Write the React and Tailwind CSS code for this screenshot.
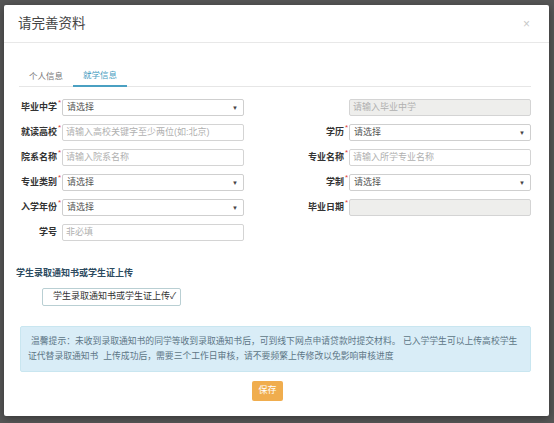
import React from "react";

const font = { fontFamily: '"Liberation Sans", "Noto Sans CJK SC", sans-serif' };

const Field = ({ label, star = true, kind = "input", placeholder = "", disabled = false }) => (
    <div className="flex items-center w-[225px] h-[17px]">
        <div className="w-[38px] text-right text-[9px] font-bold text-[#333] whitespace-nowrap leading-none">
            {label}
        </div>
        <div className="w-[5px] h-full text-[8px] leading-none text-[#e04040] pl-[1px]">
            {star && label ? "*" : ""}
        </div>
        {kind === "select" ? (
            <div className="flex-1 h-full flex items-center justify-between border border-[#cfcfcf] rounded-[2px] bg-white pl-[4px] pr-[5px]">
                <span className="text-[9px] text-[#555] leading-none">请选择</span>
                <span className="text-[6px] text-[#444] leading-none">▼</span>
            </div>
        ) : (
            <div
                className={`flex-1 h-full flex items-center border border-[#d4d4d4] rounded-[2px] pl-[3px] ${disabled ? "bg-[#eeeeec]" : "bg-white"}`}
            >
                <span className="text-[9px] text-[#b0b0b0] leading-none whitespace-nowrap">{placeholder}</span>
            </div>
        )}
    </div>
);

export default function App() {
    const rows = [
        [
            { label: "毕业中学", kind: "select" },
            { label: "", placeholder: "请输入毕业中学", disabled: true },
        ],
        [
            { label: "就读高校", placeholder: "请输入高校关键字至少两位(如:北京)" },
            { label: "学历", kind: "select" },
        ],
        [
            { label: "院系名称", placeholder: "请输入院系名称" },
            { label: "专业名称", placeholder: "请输入所学专业名称" },
        ],
        [
            { label: "专业类别", kind: "select" },
            { label: "学制", kind: "select" },
        ],
        [
            { label: "入学年份", kind: "select" },
            { label: "毕业日期", disabled: true },
        ],
        [{ label: "学号", star: false, placeholder: "非必填" }, null],
    ];

    return (
        <div className="w-[554px] h-[423px] bg-[#575757] pt-[5px] pl-[4px] overflow-hidden" style={font}>
            <div className="w-[545px] h-[411px] bg-white rounded-[2px] shadow-[0_2px_8px_rgba(0,0,0,0.4)] flex flex-col overflow-hidden">
                {/* header */}
                <div className="h-[38px] shrink-0 flex items-center justify-between border-b border-[#e8e8e8] pl-[14px] pr-[19px]">
                    <span className="text-[13.5px] text-[#444] leading-none">请完善资料</span>
                    <span className="text-[12px] text-[#c8c8c8] leading-none">×</span>
                </div>

                {/* body */}
                <div className="pl-[15px] pr-[18px] pt-[23px]">
                    <div className="flex border-b border-[#e6e6e6] h-[21px]">
                        <div className="px-[10px] h-[20px] flex items-center text-[8.5px] text-[#777]">个人信息</div>
                        <div className="px-[10px] h-[21px] flex items-center text-[8.5px] text-[#4aa0c2] border-b-2 border-[#4aa0c2]">
                            就学信息
                        </div>
                    </div>

                    <div className="flex flex-col gap-[8px] pt-[12px]">
                        {rows.map((r, i) => (
                            <div key={i} className="flex justify-between">
                                <Field {...r[0]} />
                                {r[1] ? <Field {...r[1]} /> : <div className="w-[225px]" />}
                            </div>
                        ))}
                    </div>

                    <div className="pt-[28px] -ml-[3px] text-[9px] font-bold text-[#2d4b5f] leading-none">
                        学生录取通知书或学生证上传
                    </div>
                    <div className="pt-[10px] pl-[23px]">
                        <div className="w-[139px] h-[18px] flex items-center border border-[#b9cfd3] rounded-[2px] pl-[10px] text-[9px] text-[#333] whitespace-nowrap overflow-hidden">
                            学生录取通知书或学生证上传✓
                        </div>
                    </div>

                    <div className="mt-[20px] ml-[1px] bg-[#d9edf7] border border-[#c9e6f0] rounded-[2px] py-[7px] pl-[7px] pr-[4px] text-[8.8px] leading-[15px] text-[#5d7686] whitespace-nowrap overflow-hidden">
                        <div className="pl-[3px]">
                            温馨提示：未收到录取通知书的同学等收到录取通知书后，可到线下网点申请贷款时提交材料。 已入学学生可以上传高校学生
                        </div>
                        <div>证代替录取通知书 &nbsp;上传成功后，需要三个工作日审核，请不要频繁上传修改以免影响审核进度</div>
                    </div>
                </div>

                <div className="pt-[9px] pl-[248px]">
                    <div className="w-[31px] h-[20px] flex items-center justify-center bg-[#f0ad4e] rounded-[2px] text-[9px] text-white">
                        保存
                    </div>
                </div>
            </div>
        </div>
    );
}
